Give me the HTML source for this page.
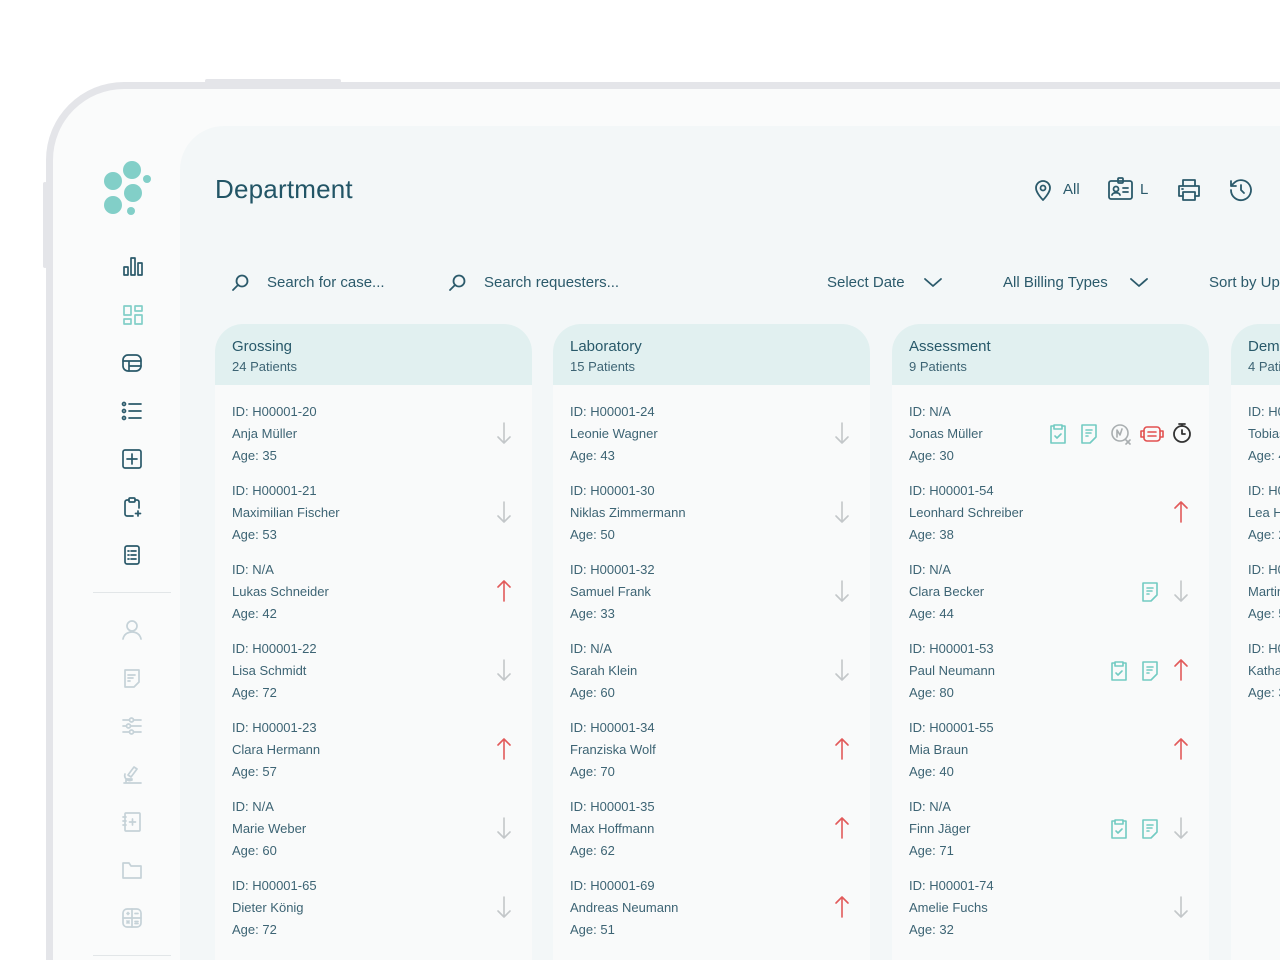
<!DOCTYPE html>
<html><head><meta charset="utf-8">
<style>
*{margin:0;padding:0;box-sizing:border-box}
html,body{width:1280px;height:960px;overflow:hidden}
body{background:#fff;font-family:"Liberation Sans",sans-serif;position:relative}
.wrap{position:absolute;left:0;top:0;width:1280px;height:960px;overflow:hidden}
.frame{position:absolute;left:46px;top:82px;width:1234px;height:878px;border:7px solid #e4e5e9;border-right:none;border-bottom:none;border-top-left-radius:78px;background:#fafbfb}
.btn1{position:absolute;left:205px;top:79px;width:136px;height:4px;background:#e4e5e9;border-radius:2px}
.btn2{position:absolute;left:43px;top:182px;width:4px;height:86px;background:#e4e5e9;border-radius:2px}
.main{position:absolute;left:180px;top:126px;width:1100px;height:834px;background:#f3f7f8;border-top-left-radius:44px}
.title{position:absolute;left:215px;top:174px;font-size:26px;color:#225566;letter-spacing:.2px}
.tb{position:absolute;color:#2b5a6b;font-size:15px}
svg.i{position:absolute;fill:none;stroke:#2b5a6b;stroke-width:1.8;stroke-linecap:round;stroke-linejoin:round}
.col{position:absolute;top:324px;width:317px;height:636px;background:#f9fafa;border-radius:28px 28px 0 0;overflow:hidden}
.hd{height:61px;background:#e1f0f0;padding:14px 17px 0}
.hd b{display:block;font-weight:normal;font-size:15px;color:#28596a}
.hd span{display:block;font-size:13px;color:#3d6474;margin-top:4px}
.row{position:relative;height:79px;padding:16px 17px 0;font-size:13px;color:#3d6474;line-height:22px}
.row svg{position:absolute;top:36px;stroke-width:1.6;fill:none;stroke-linecap:round;stroke-linejoin:round}
.sb svg{position:absolute;fill:none;stroke:#2b5a6b;stroke-width:1.7;stroke-linecap:round;stroke-linejoin:round}
.sb .l svg{stroke:#c5d2d8}
</style></head><body><div class="wrap">
<div class="btn1"></div><div class="btn2"></div>
<div class="frame"></div>
<div class="main"></div>
<svg style="position:absolute;left:100px;top:155px" width="60" height="70"><g fill="#82cfc8"><circle cx="13" cy="26" r="9"/><circle cx="32" cy="15" r="9"/><circle cx="47" cy="24" r="4"/><circle cx="33" cy="38" r="9"/><circle cx="13" cy="50" r="9"/><circle cx="31" cy="56" r="4"/></g></svg>
<div class="sb">
<svg style="left:121px;top:254px" width="24" height="24"><rect x="3" y="13" width="4" height="8"/><rect x="10" y="4" width="4" height="17"/><rect x="17" y="9" width="4" height="12"/></svg>
<svg style="left:121px;top:303px;stroke:#82cfc8" width="24" height="24"><rect x="3" y="3" width="7" height="9"/><rect x="14" y="3" width="7" height="5"/><rect x="3" y="16" width="7" height="5"/><rect x="14" y="12" width="7" height="9"/></svg>
<svg style="left:120px;top:351px" width="24" height="24"><rect x="3" y="4" width="18" height="16" rx="5"/><path d="M3 10h18M9 10v10M9 15h12"/></svg>
<svg style="left:120px;top:399px" width="24" height="24"><circle cx="4" cy="5" r="1.5"/><circle cx="4" cy="12" r="1.5"/><circle cx="4" cy="19" r="1.5"/><path d="M9 5h12M9 12h12M9 19h12"/></svg>
<svg style="left:120px;top:447px" width="24" height="24"><rect x="3" y="3" width="18" height="18" rx="2"/><path d="M12 7v10M7 12h10"/></svg>
<svg style="left:120px;top:495px" width="24" height="24"><path d="M15 5h2a2 2 0 0 1 2 2v6M9 5H7a2 2 0 0 0-2 2v12a2 2 0 0 0 2 2h6"/><rect x="9" y="3" width="6" height="4" rx="1"/><path d="M18 16v5M15.5 18.5h5"/></svg>
<svg style="left:120px;top:543px" width="24" height="24"><rect x="5" y="3" width="14" height="18" rx="2"/><path d="M8 8h1M11 8h5M8 12h1M11 12h5M8 16h1M11 16h5"/></svg>
<div style="position:absolute;left:93px;top:592px;width:78px;height:1px;background:#e2e6e8"></div>
<div class="l">
<svg style="left:120px;top:618px" width="24" height="24"><circle cx="12" cy="8" r="5"/><path d="M3 21c1-5 5-7 9-7s8 2 9 7"/></svg>
<svg style="left:120px;top:666px" width="24" height="24"><path d="M5 4h14v12l-5 5H5z"/><path d="M8 9h7M8 12h5M8 15h2"/></svg>
<svg style="left:120px;top:714px" width="24" height="24"><path d="M3 6h6M14 6h7M3 12h3M11 12h10M3 18h6M14 18h7"/><circle cx="11.5" cy="6" r="2"/><circle cx="8.5" cy="12" r="2"/><circle cx="11.5" cy="18" r="2"/></svg>
<svg style="left:120px;top:762px" width="24" height="24"><path d="M4 21h17M6 21v-4h6M8 13l6-8 3 2-6 8zM5 12a5 5 0 0 0 7 6"/></svg>
<svg style="left:120px;top:810px" width="24" height="24"><rect x="5" y="3" width="15" height="18" rx="1"/><path d="M12.5 9v6M9.5 12h6M3 7h3M3 11h3M3 15h3"/></svg>
<svg style="left:120px;top:858px" width="24" height="24"><path d="M3 5h6l2 3h10v12H3z"/></svg>
<svg style="left:120px;top:906px" width="24" height="24"><rect x="3" y="3" width="18" height="18" rx="4"/><path d="M3 12h18M12 3v18M7 7.5h2M8 6.5v2M15 7.5h3M7 15l2 2M9 15l-2 2M15 15.5h3M15 17.5h3"/></svg>
</div>
<div style="position:absolute;left:93px;top:955px;width:78px;height:1px;background:#e2e6e8"></div>
</div>

<div class="title">Department</div>
<svg class="i" style="left:1032px;top:178px" width="22" height="24"><path d="M11 22s-7-7-7-12a7 7 0 0 1 14 0c0 5-7 12-7 12z"/><circle cx="11" cy="10" r="2.5"/></svg>
<div class="tb" style="left:1063px;top:181px">All</div>
<svg class="i" style="left:1107px;top:176px" width="28" height="26"><rect x="2" y="5" width="23" height="18" rx="2"/><rect x="11" y="2" width="5" height="5" rx="1"/><circle cx="9" cy="13" r="2.5"/><path d="M5 19c1-3 7-3 8 0M16 12h5M16 16h5"/></svg>
<div class="tb" style="left:1140px;top:181px">L</div>
<svg class="i" style="left:1176px;top:177px" width="26" height="26"><path d="M7 9V3h12v6M7 19H3V9h20v10h-4"/><rect x="7" y="15" width="12" height="8"/><path d="M6 12h1"/></svg>
<svg class="i" style="left:1227px;top:176px" width="28" height="28"><path d="M4 14a10 10 0 1 0 3-7L4 10M4 5v5h5"/><path d="M14 9v5l3 3"/></svg>

<svg class="i" style="left:231px;top:273px" width="20" height="20"><circle cx="11" cy="8" r="5.5"/><path d="M7 12l-5 5"/></svg>
<div class="tb" style="left:267px;top:274px">Search for case...</div>
<svg class="i" style="left:448px;top:273px" width="20" height="20"><circle cx="11" cy="8" r="5.5"/><path d="M7 12l-5 5"/></svg>
<div class="tb" style="left:484px;top:274px">Search requesters...</div>
<div class="tb" style="left:827px;top:274px">Select Date</div>
<svg class="i" style="left:922px;top:274px" width="22" height="16"><path d="M3 5l8 7 8-7"/></svg>
<div class="tb" style="left:1003px;top:274px">All Billing Types</div>
<svg class="i" style="left:1128px;top:274px" width="22" height="16"><path d="M3 5l8 7 8-7"/></svg>
<div class="tb" style="left:1209px;top:274px;white-space:nowrap">Sort by Up</div>

<div id="cols"></div>
</div>
<script>
var D='<svg width="16" height="24" viewBox="0 0 16 24" style="stroke:#c3c7c9;left:281px"><path d="M8 2v20M2 16l6 6 6-6"/></svg>';
var U='<svg width="16" height="24" viewBox="0 0 16 24" style="stroke:#e25a5a;left:281px"><path d="M8 22V2M2 8l6-6 6 6"/></svg>';
function C(x){return '<svg width="20" height="22" viewBox="0 0 20 22" style="stroke:#72cbc2;left:'+x+'px;top:38px"><path d="M6 3H3v17h14V3h-3"/><path d="M6 2h8v4H6zM7 13l2 2 4-4"/></svg>'}
function Dc(x){return '<svg width="20" height="22" viewBox="0 0 20 22" style="stroke:#72cbc2;left:'+x+'px;top:38px"><path d="M3 2h14v12l-6 6H3z"/><path d="M7 7h6M7 10h5M7 13h2"/></svg>'}
var cols=[
[215,'Grossing','24 Patients',[['H00001-20','Anja Müller',35,D],['H00001-21','Maximilian Fischer',53,D],['N/A','Lukas Schneider',42,U],['H00001-22','Lisa Schmidt',72,D],['H00001-23','Clara Hermann',57,U],['N/A','Marie Weber',60,D],['H00001-65','Dieter König',72,D],['H00001-66','',0,'']]],
[553,'Laboratory','15 Patients',[['H00001-24','Leonie Wagner',43,D],['H00001-30','Niklas Zimmermann',50,D],['H00001-32','Samuel Frank',33,D],['N/A','Sarah Klein',60,D],['H00001-34','Franziska Wolf',70,U],['H00001-35','Max Hoffmann',62,U],['H00001-69','Andreas Neumann',51,U],['H00001-70','',0,'']]],
[892,'Assessment','9 Patients',[['N/A','Jonas Müller',30,'X'],['H00001-54','Leonhard Schreiber',38,U],['N/A','Clara Becker',44,Dc(248)+D],['H00001-53','Paul Neumann',80,C(217)+Dc(248)+U],['H00001-55','Mia Braun',40,U],['N/A','Finn Jäger',71,C(217)+Dc(248)+D],['H00001-74','Amelie Fuchs',32,D],['H00001-75','',0,'']]],
[1231,'Dem','4 Patients',[['H00001-80','Tobias Lang',45,''],['H00001-81','Lea Hahn',29,''],['H00001-82','Martin Roth',51,''],['H00001-83','Katharina Vogel',36,'']]]
];
var X=C(156)+Dc(187)+'<svg width="22" height="22" viewBox="0 0 22 22" style="stroke:#a9aeb0;left:218px;top:38px"><circle cx="10" cy="10" r="8"/><path d="M7 14V7l3 5 2-6M16 17l4 4M20 17l-4 4"/></svg><svg width="24" height="20" viewBox="0 0 24 20" style="stroke:#e2504f;left:248px;top:39px"><rect x="4" y="3" width="16" height="14" rx="3"/><path d="M4 7H1v6h3M20 7h3v6h-3M8 8h8M8 12h8"/></svg><svg width="22" height="22" viewBox="0 0 22 22" style="stroke:#333;left:279px;top:37px;stroke-width:1.8"><circle cx="11" cy="12" r="8"/><path d="M8 2h6M11 2v2M11 8v4h3"/></svg>';
var h='';
cols.forEach(function(c){
 h+='<div class="col" style="left:'+c[0]+'px"><div class="hd"><b>'+c[1]+'</b><span>'+c[2]+'</span></div>';
 c[3].forEach(function(r){
  var ic=r[3]=='X'?X:r[3];
  h+='<div class="row">ID: '+r[0]+(r[1]?'<br>'+r[1]+'<br>Age: '+r[2]:'')+ic+'</div>';
 });
 h+='</div>';
});
document.getElementById('cols').innerHTML=h;
</script>
</body></html>
